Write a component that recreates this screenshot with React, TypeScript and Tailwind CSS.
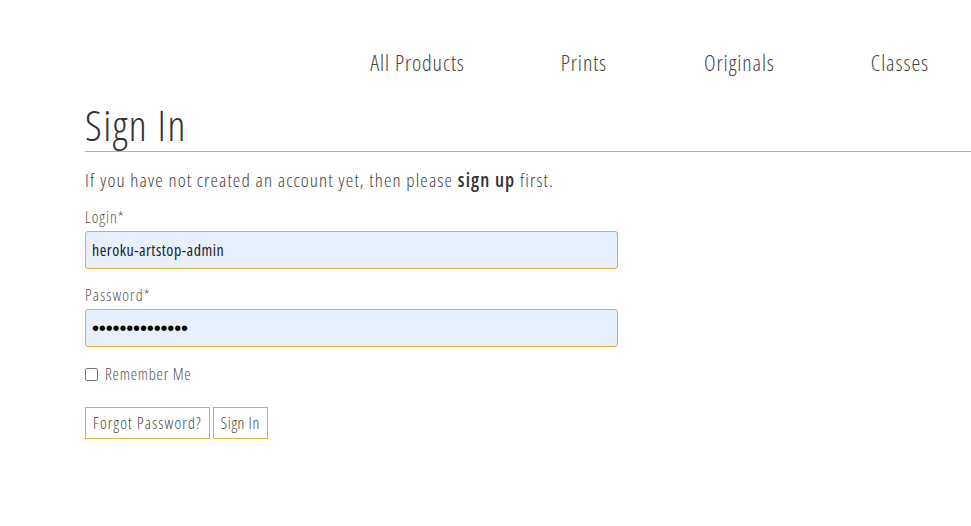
import React from "react";

export default function App() {
  return (
    <div className="min-h-[526px] w-full bg-white font-['Open_Sans',sans-serif] font-light text-[#444] [font-stretch:75%]">
      <nav className="flex justify-end pr-[42px] pt-[48px] text-[22px] leading-[28px] tracking-[0.9px] text-[#444]">
        <a className="mr-[96px]">All Products</a>
        <a className="mr-[97px]">Prints</a>
        <a className="mr-[96px]">Originals</a>
        <a>Classes</a>
      </nav>
      <div className="pl-[85px] pt-[25px]">
        <h1 className="border-b border-[#d8b43a] pb-[2px] text-[42px] leading-[48px] tracking-[1.5px] text-[#333]">Sign In</h1>
        <p className="mt-[16px] text-[19px] leading-[24px] tracking-[1.1px] text-[#444]">
          If you have not created an account yet, then please{" "}
          <b className="font-semibold text-[#333]">sign up</b> first.
        </p>
        <form className="mt-[15px] w-[533px]">
          <label className="block text-[16px] leading-[20px] tracking-[1px] text-[#555]">Login*</label>
          <input
            readOnly
            value="heroku-artstop-admin"
            className="mt-[4px] block h-[38px] w-full rounded-[3px] border border-[#d8b43a] bg-[#e8f0fe] px-[6px] text-[16px] font-normal tracking-[0.5px] text-[#222] outline-none"
          />
          <label className="mt-[16px] block text-[16px] leading-[20px] tracking-[1.1px] text-[#555]">Password*</label>
          <input
            readOnly
            type="password"
            value="abcdefghijklmn"
            className="mt-[4px] block h-[38px] w-full rounded-[3px] border border-[#d8b43a] bg-[#e8f0fe] px-[6px] font-['Liberation_Sans',sans-serif] text-[20px] tracking-[-0.15px] text-black outline-none [font-stretch:100%]"
          />
          <label className="mt-[17px] flex items-center gap-[7px] text-[16px] leading-[20px] tracking-[0.8px] text-[#555]">
            <span className="inline-block h-[13px] w-[13px] rounded-[2px] border border-[#767676] bg-white" />
            Remember Me
          </label>
          <div className="mt-[23px] flex gap-[3px]">
            <button type="button" className="h-[32px] border border-[#d8b43a] bg-white px-[7px] text-[16px] tracking-[1.15px] text-[#444]">
              Forgot Password?
            </button>
            <button type="button" className="h-[32px] border border-[#d8b43a] bg-white px-[7px] text-[16px] tracking-[0.6px] text-[#444]">
              Sign In
            </button>
          </div>
        </form>
      </div>
    </div>
  );
}
